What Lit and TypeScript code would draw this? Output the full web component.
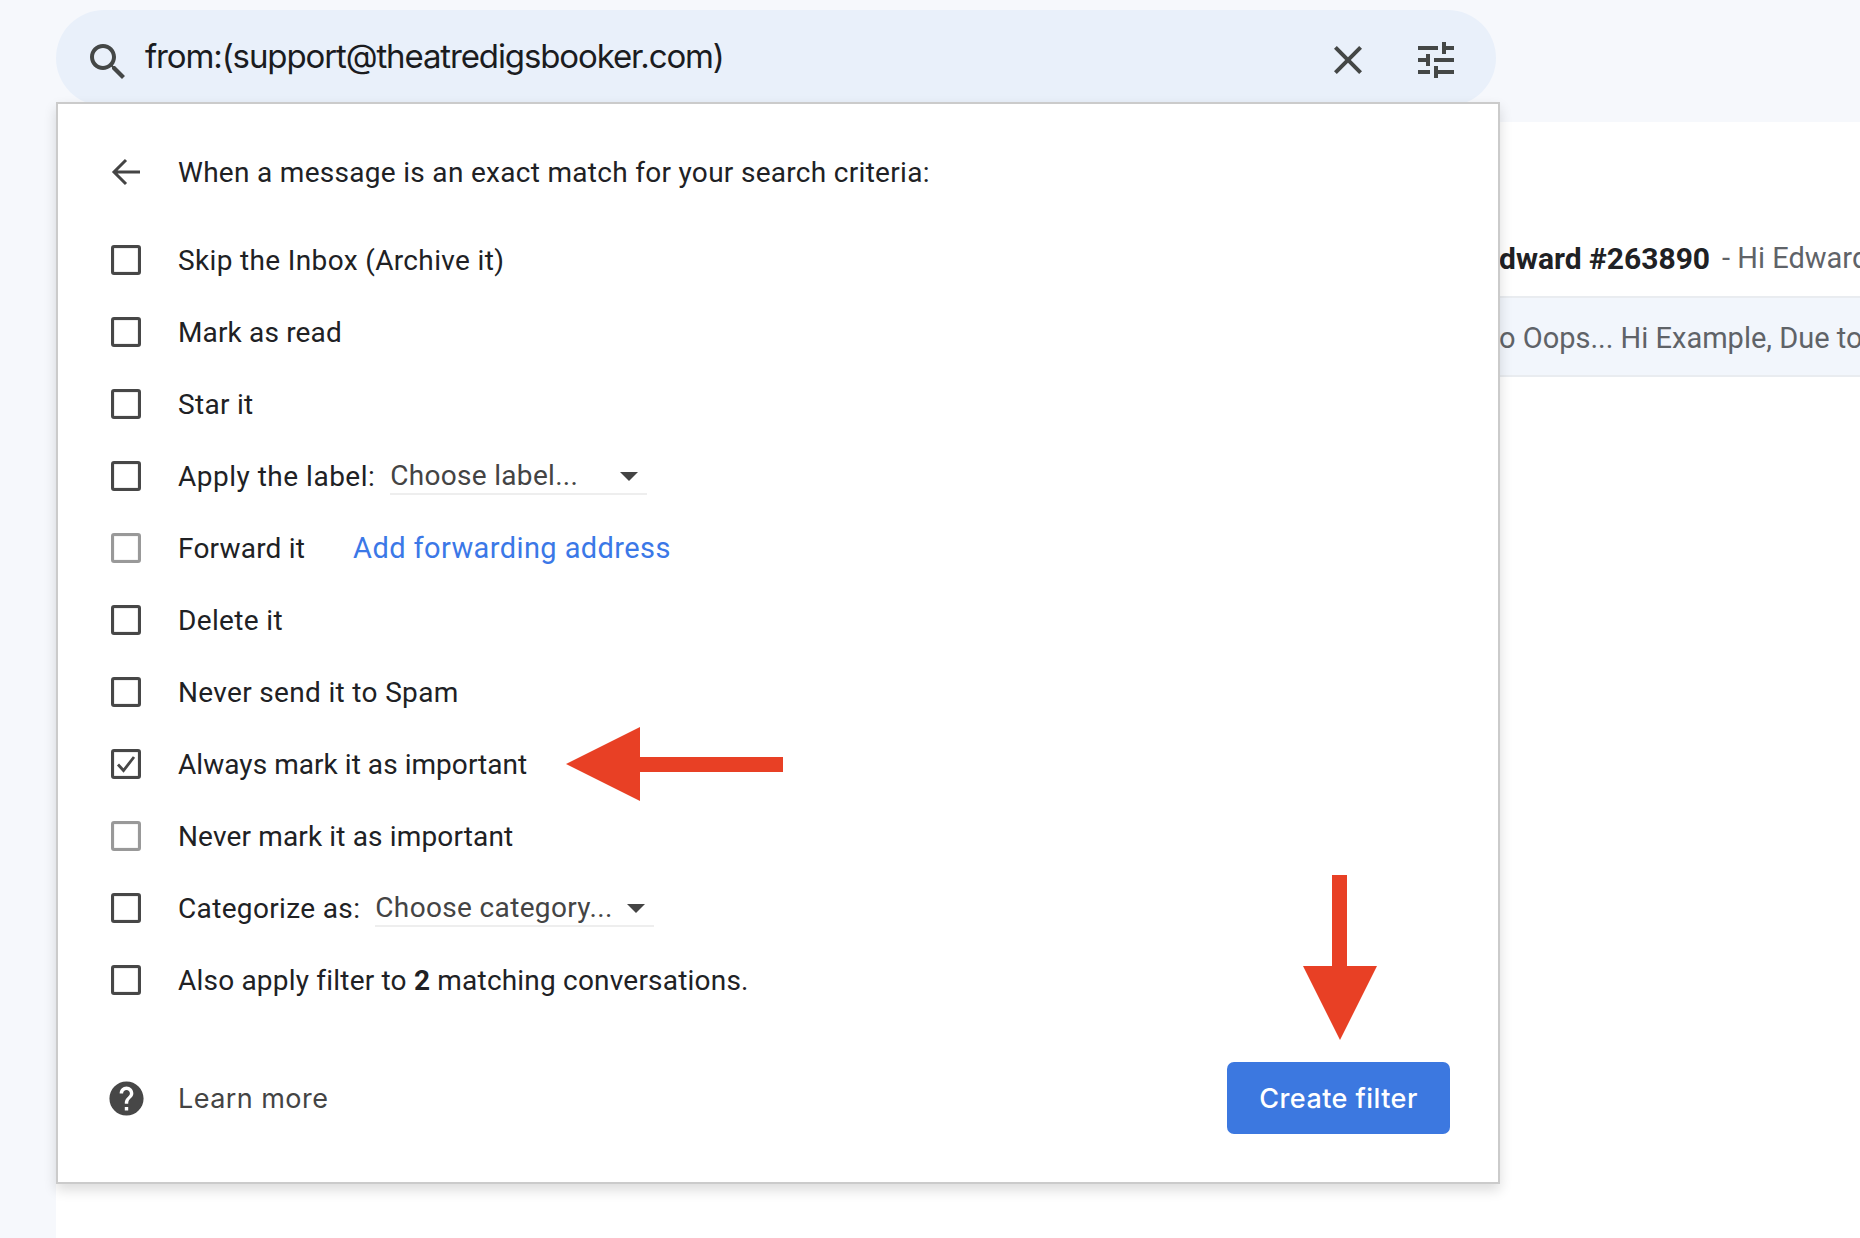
import { LitElement, html, css, svg } from "lit";
import { customElement } from "lit/decorators.js";

const ICON = {
  search: "M15.5 14h-.79l-.28-.27C15.41 12.59 16 11.11 16 9.5 16 5.91 13.09 3 9.5 3S3 5.91 3 9.5 5.91 16 9.5 16c1.61 0 3.09-.59 4.23-1.57l.27.28v.79l5 4.99L20.49 19l-4.99-5zm-6 0C7.01 14 5 11.99 5 9.5S7.01 5 9.5 5 14 7.01 14 9.5 11.99 14 9.5 14z",
  close: "M19 6.41 17.59 5 12 10.59 6.41 5 5 6.41 10.59 12 5 17.59 6.41 19 12 13.41 17.59 19 19 17.59 13.41 12z",
  tune: "M3 17v2h6v-2H3zM3 5v2h10V5H3zm10 16v-2h8v-2h-8v-2h-2v6h2zM7 9v2H3v2h4v2h2V9H7zm14 4v-2H11v2h10zm-6-4h2V7h4V5h-4V3h-2v6z",
  help: "M12 2C6.48 2 2 6.48 2 12s4.48 10 10 10 10-4.48 10-10S17.52 2 12 2zm1 17h-2v-2h2v2zm2.07-7.75l-.9.92C13.45 12.9 13 13.5 13 15h-2v-.5c0-1.1.45-2.1 1.17-2.83l1.24-1.26c.37-.36.59-.86.59-1.41 0-1.1-.9-2-2-2s-2 .9-2 2H8c0-2.21 1.79-4 4-4s4 1.79 4 4c0 .88-.36 1.68-.93 2.25z",
};

const icon = (d: string, cls: string) =>
  html`<svg class=${cls} viewBox="0 0 24 24" aria-hidden="true">${svg`<path d=${d}></path>`}</svg>`;

type Row = { label: string; ls?: number; dim?: boolean; on?: boolean; extra?: unknown };

@customElement("app-root")
export class AppRoot extends LitElement {
  static styles = css`
    :host { display: block; width: 1860px; height: 1238px; overflow: hidden; position: relative; background: #fff; font-family: Roboto, "Liberation Sans", sans-serif; color: #202124; }
    .page { display: grid; grid-template-columns: 56px 1fr; grid-template-rows: 122px 1fr; height: 1238px; }
    .top { grid-column: 1 / 3; background: #f6f8fc; padding: 10px 0 0 56px; }
    .side { background: #f6f8fc; }
    .search { width: 1440px; height: 96px; box-sizing: border-box; background: #e9f0fa; border-radius: 48px; display: flex; align-items: center; padding: 5px 36px 0 28px; }
    .search .q { flex: 1; margin: 0 0 10px 13px; font-size: 33px; line-height: 40px; color: #1b1c1f; font-family: Inter, Roboto, sans-serif; letter-spacing: -1.12px; white-space: nowrap; }
    .i48 { width: 48px; height: 48px; fill: #444746; flex: none; }
    .i48.lo { margin-top: 2px; }
    .i48.hi { margin-bottom: 2px; }
    .i48.hi + .i48.hi { margin-left: 40px; }
    .list { padding-top: 120px; min-width: 0; }
    .mail { height: 81px; box-sizing: border-box; padding-left: 1443px; display: flex; align-items: center; white-space: nowrap; font-size: 29px; color: #5f6368; }
    .mail b { color: #202124; font-weight: 700; font-size: 30px; margin-right: 9px; }
    .mail span { margin-left: 4px; }
    .mail.one { height: 32px; margin-bottom: 22px; }
    .mail.one span { margin-left: 3px; }
    .mail.two { background: #f2f6fc; border-top: 2px solid #e9ecf0; border-bottom: 2px solid #e9ecf0; padding-top: 2px; }
    .mail.two span { margin-left: 0; }
    .panel { position: absolute; left: 56px; top: 102px; width: 1444px; height: 1082px; box-sizing: border-box; background: #fff; border: 2px solid #cbcbcb; box-shadow: 0 6px 12px rgba(0,0,0,.14); padding: 32px 48px 0 52px; display: flex; flex-direction: column; font-size: 28px; letter-spacing: .3px; }
    .row { height: 72px; display: flex; align-items: center; white-space: nowrap; flex: none; }
    .head { margin-bottom: 16px; }
    .slot { width: 32px; margin-right: 36px; display: flex; justify-content: center; align-items: center; flex: none; }
    .box { width: 30px; height: 30px; box-sizing: border-box; border: 3px solid #474747; border-radius: 3px; box-shadow: inset 0 0 1px #474747; display: flex; }
    .box.dim { border-color: #999; box-shadow: inset 0 0 1px #999; }
    .box svg { width: 24px; height: 24px; fill: none; stroke: #474747; stroke-width: 2.8; }
    .back { width: 32px; height: 32px; fill: none; stroke: #444; stroke-width: 3; }
    .link { color: #3b78e7; margin-left: 48px; font-size: 29px; letter-spacing: .4px; }
    .pick { position: relative; margin-left: 15px; height: 36px; line-height: 38px; border-bottom: 2px solid #eee; color: #444; }
    .pick.label { width: 257px; }
    .pick.cat { margin-left: 15px; width: 279px; letter-spacing: .35px; }
    .pick::after { content: ""; position: absolute; right: 9px; top: 15px; border-left: 9px solid transparent; border-right: 9px solid transparent; border-top: 9px solid #444; }
    .foot { margin-top: 46px; display: flex; justify-content: space-between; align-items: center; height: 72px; flex: none; }
    .foot-l { display: flex; align-items: center; color: #444; font-family: Inter, Roboto, sans-serif; font-size: 27px; letter-spacing: .45px; }
    .help { width: 41px; height: 41px; fill: #474747; flex: none; margin: 0 -4px; }
    .btn { width: 223px; height: 72px; display: flex; align-items: center; justify-content: center; background: #3c78e0; color: #fff; border-radius: 7px; font-family: Inter, Roboto, sans-serif; font-size: 27px; font-weight: 500; letter-spacing: .45px; }
    .mark { position: absolute; fill: #e84025; }
    .m-left { left: 566px; top: 727px; width: 217px; height: 74px; }
    .m-down { left: 1303px; top: 875px; width: 74px; height: 165px; }
  `;

  private box(r: Row) {
    return html`<span class="slot"><span class="box ${r.dim ? "dim" : ""}">${r.on
      ? html`<svg viewBox="0 0 24 24"><path d="M4 12.5l5.5 6L20 5"></path></svg>`
      : ""}</span></span>`;
  }

  render() {
    const rows: Row[] = [
      { label: "Skip the Inbox (Archive it)", ls: 0.35 },
      { label: "Mark as read", ls: 0.15 },
      { label: "Star it", ls: 0.3 },
      { label: "Apply the label:", ls: 0.5, extra: html`<span class="pick label">Choose label...</span>` },
      { label: "Forward it", ls: 0.2, dim: true, extra: html`<span class="link">Add forwarding address</span>` },
      { label: "Delete it", ls: 0.35 },
      { label: "Never send it to Spam", ls: 0.33 },
      { label: "Always mark it as important", ls: 0.05, on: true },
      { label: "Never mark it as important", ls: 0.15, dim: true },
      { label: "Categorize as:", ls: 0.35, extra: html`<span class="pick cat">Choose category...</span>` },
    ];
    return html`
      <div class="page">
        <div class="top">
          <div class="search">
            ${icon(ICON.search, "i48 lo")}
            <span class="q">from:(support@theatredigsbooker.com)</span>
            ${icon(ICON.close, "i48 hi")}
            ${icon(ICON.tune, "i48 hi")}
          </div>
        </div>
        <div class="side"></div>
        <div class="list">
          <div class="mail one"><b>dward #263890</b><span>- Hi Edward</span></div>
          <div class="mail two"><span>o Oops... Hi Example, Due to</span></div>
        </div>
      </div>
      <div class="panel">
        <div class="row head">
          <span class="slot"><svg class="back" viewBox="0 0 32 32"><path d="M30 16H5M16 4 4 16l12 12"></path></svg></span>
          When a message is an exact match for your search criteria:
        </div>
        ${rows.map((r) => html`<div class="row">${this.box(r)}<span style="letter-spacing:${r.ls}px">${r.label}</span>${r.extra ?? ""}</div>`)}
        <div class="row">${this.box({ label: "" })}<span style="letter-spacing:.2px">Also apply filter to <b>2</b> matching conversations.</span></div>
        <div class="foot">
          <div class="foot-l"><span class="slot">${icon(ICON.help, "help")}</span>Learn more</div>
          <div class="btn">Create filter</div>
        </div>
      </div>
      <svg class="mark m-left" viewBox="0 0 217 74"><path d="M0 37 74 0V30H217V45H74V74Z"></path></svg>
      <svg class="mark m-down" viewBox="0 0 74 165"><path d="M29 0H44V91H74L37 165 0 91H29Z"></path></svg>
    `;
  }
}
